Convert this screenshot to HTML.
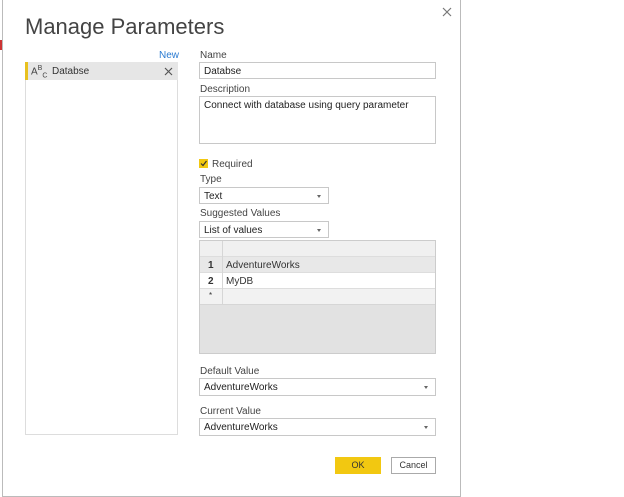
<!DOCTYPE html>
<html><head><style>
*{box-sizing:border-box;margin:0;padding:0}
body{width:624px;height:497px;background:#fff;position:relative;overflow:hidden;font-family:"Liberation Sans",sans-serif;font-size:10px;color:#333}
.a{position:absolute}
.dlg{left:2px;top:-1px;width:459px;height:498px;border:1px solid #bbb;background:#fff}
.lbl{font-size:10px;color:#444}
.box{border:1px solid #c8c8c8;background:#fff;padding:3px 4px;font-size:10px;color:#222}
.arr{position:absolute;right:7px;top:7px;width:0;height:0;border-left:2px solid transparent;border-right:2px solid transparent;border-top:3px solid #666}
</style></head><body>
<div class="a" style="left:0;top:40px;width:2px;height:10px;background:#c33"></div>
<div class="a dlg"></div>
<div class="a" style="left:25px;top:14px;font-size:22px;color:#444;font-weight:300">Manage Parameters</div>
<svg class="a" style="left:442px;top:7px" width="10" height="10"><path d="M1 1L9 9M9 1L1 9" stroke="#777" stroke-width="1.2"/></svg>
<div class="a" style="left:159px;top:50px;color:#2b7bd1;font-size:10px">New</div>
<div class="a" style="left:25px;top:62px;width:153px;height:373px;border:1px solid #ddd"></div>
<div class="a" style="left:25px;top:62px;width:153px;height:18px;background:#e6e6e6;border-left:3px solid #e8c11f"></div>
<div class="a" style="left:31px;top:65px;font-size:10px;color:#444">A<sup style="font-size:7px">B</sup><sub style="font-size:7px">C</sub></div>
<div class="a" style="left:52px;top:66px;color:#333">Databse</div>
<svg class="a" style="left:164px;top:67px" width="9" height="9"><path d="M1 1L8 8M8 1L1 8" stroke="#555" stroke-width="1.2"/></svg>

<div class="a lbl" style="left:200px;top:50px">Name</div>
<div class="a box" style="left:199px;top:62px;width:237px;height:17px">Databse</div>
<div class="a lbl" style="left:200px;top:84px">Description</div>
<div class="a box" style="left:199px;top:96px;width:237px;height:48px">Connect with database using query parameter</div>
<div class="a" style="left:199px;top:159px;width:9px;height:9px;background:#f2c811"></div>
<svg class="a" style="left:199px;top:159px" width="9" height="9"><path d="M2 4.5L4 6.5L7.5 2" stroke="#333" stroke-width="1.2" fill="none"/></svg>
<div class="a lbl" style="left:212px;top:159px">Required</div>
<div class="a lbl" style="left:200px;top:174px">Type</div>
<div class="a box" style="left:199px;top:187px;width:130px;height:17px">Text<i class="arr"></i></div>
<div class="a lbl" style="left:200px;top:208px">Suggested Values</div>
<div class="a box" style="left:199px;top:221px;width:130px;height:17px">List of values<i class="arr"></i></div>

<div class="a" style="left:199px;top:240px;width:237px;height:114px;background:#e2e2e2;border:1px solid #ccc"></div>
<div class="a" style="left:200px;top:241px;width:235px;height:16px;background:#f0f0f0;border-bottom:1px solid #ddd"></div>
<div class="a" style="left:200px;top:257px;width:235px;height:16px;background:#e8e8e8;border-bottom:1px solid #ddd"></div>
<div class="a" style="left:200px;top:273px;width:235px;height:16px;background:#fff;border-bottom:1px solid #ddd"></div>
<div class="a" style="left:200px;top:289px;width:235px;height:16px;background:#f2f2f2;border-bottom:1px solid #d6d6d6"></div>
<div class="a" style="left:222px;top:241px;width:1px;height:64px;background:#d6d6d6"></div>
<div class="a" style="left:208px;top:260px;font-weight:bold;color:#333">1</div>
<div class="a" style="left:226px;top:260px">AdventureWorks</div>
<div class="a" style="left:208px;top:276px;font-weight:bold;color:#333">2</div>
<div class="a" style="left:226px;top:276px">MyDB</div>
<div class="a" style="left:209px;top:291px;font-size:8px">*</div>

<div class="a lbl" style="left:200px;top:366px">Default Value</div>
<div class="a box" style="left:199px;top:378px;width:237px;height:18px">AdventureWorks<i class="arr"></i></div>
<div class="a lbl" style="left:200px;top:406px">Current Value</div>
<div class="a box" style="left:199px;top:418px;width:237px;height:18px">AdventureWorks<i class="arr"></i></div>

<div class="a" style="left:335px;top:457px;width:46px;height:17px;background:#f2c811;text-align:center;line-height:17px;font-size:9px;color:#333">OK</div>
<div class="a" style="left:391px;top:457px;width:45px;height:17px;border:1px solid #aaa;text-align:center;line-height:15px;font-size:9px;color:#333">Cancel</div>
</body></html>
